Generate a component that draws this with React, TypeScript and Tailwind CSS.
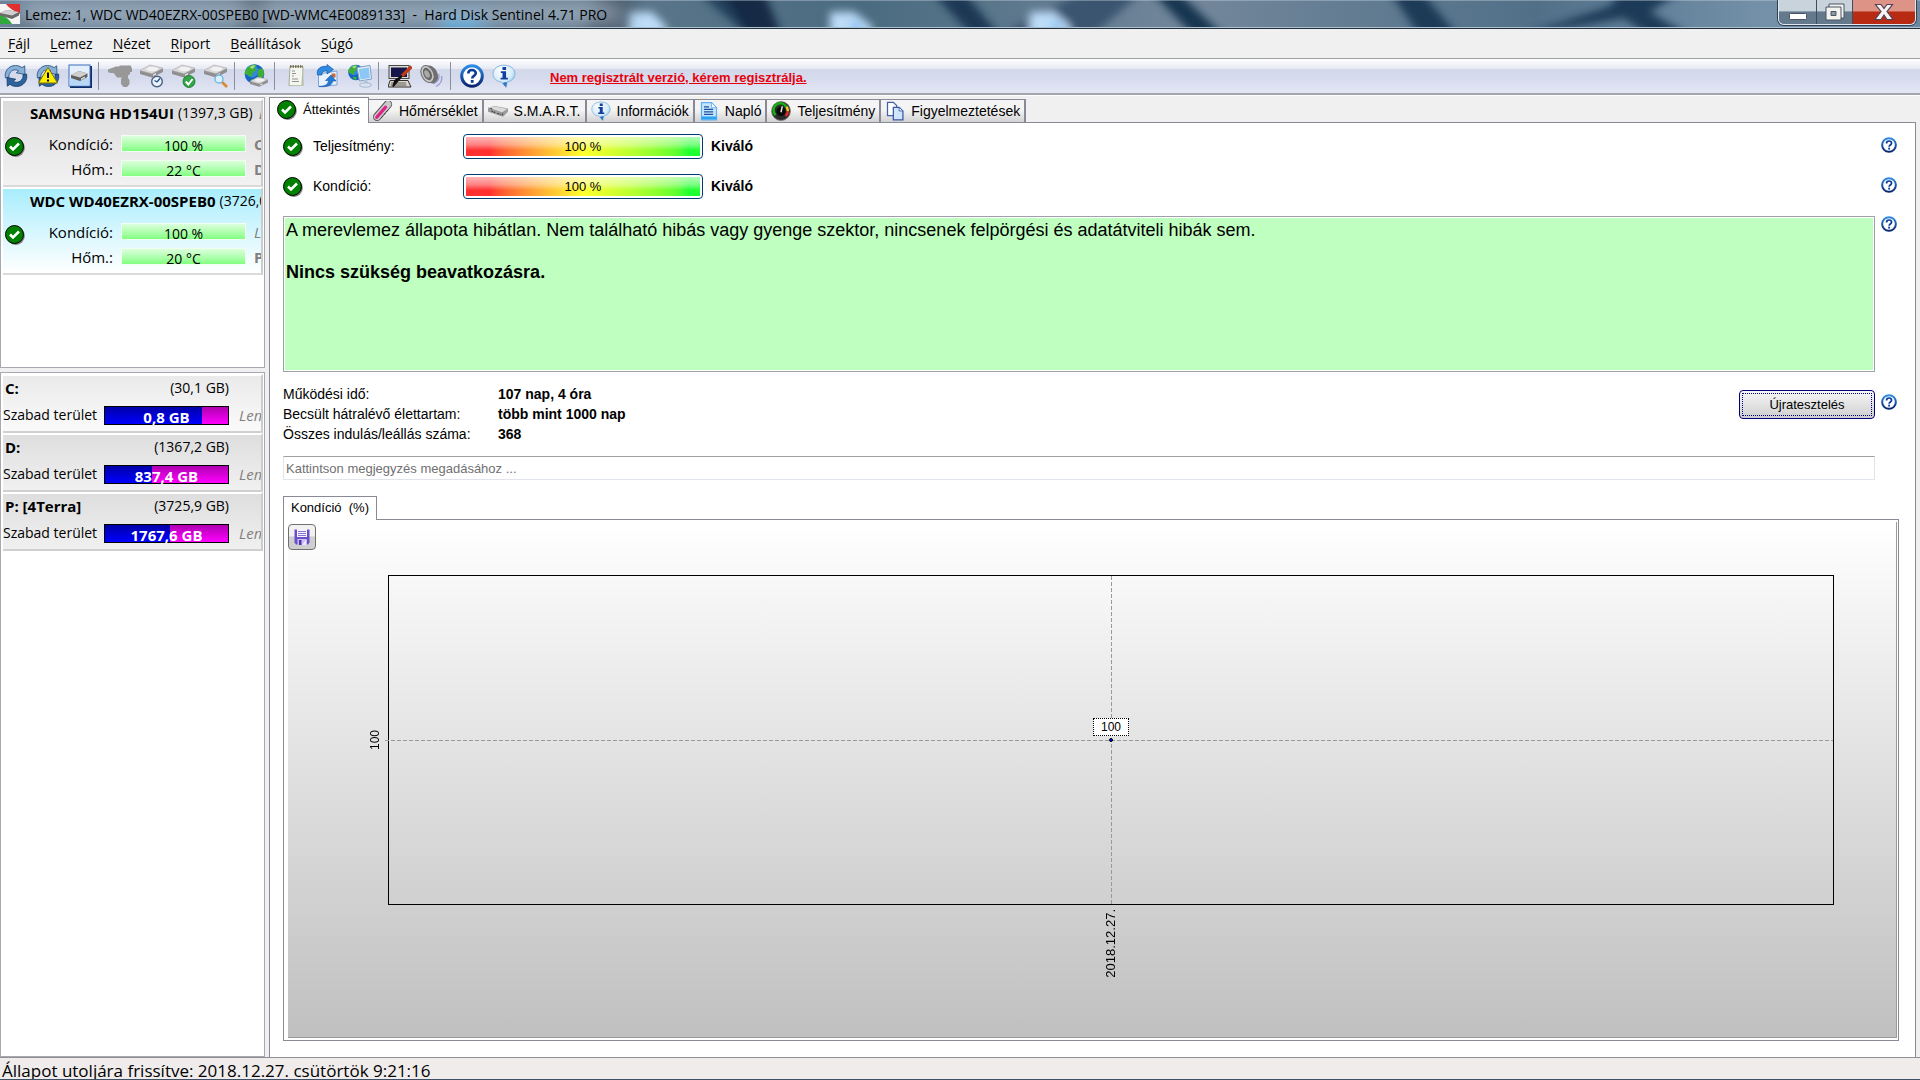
import { useState } from "react";
import type { ReactNode } from "react";

/* ---------- icons ---------- */

function CheckIcon() {
  return (
    <svg viewBox="0 0 20 20" className="h-5 w-5 shrink-0" aria-hidden="true">
      <circle cx="10.8" cy="11" r="9" fill="#808080" />
      <circle cx="9.5" cy="9.5" r="9" fill="#008000" stroke="#000" />
      <path d="M5 9.5l3 3 6-6" fill="none" stroke="#fff" strokeWidth="2.6" />
    </svg>
  );
}

function HelpIcon({ className = "h-4 w-4" }: { className?: string }) {
  return (
    <svg viewBox="0 0 24 24" className={className} aria-hidden="true">
      <defs>
        <linearGradient id="helpRing" x1="0" y1="0" x2="0" y2="1">
          <stop offset="0" stopColor="#2f8de6" />
          <stop offset="1" stopColor="#06246f" />
        </linearGradient>
      </defs>
      <circle cx="12" cy="12" r="10.3" fill="#fff" stroke="url(#helpRing)" strokeWidth="3" />
      <path
        d="M8.3 9.6c0-2.3 1.6-3.6 3.7-3.6s3.8 1.3 3.8 3.3c0 2.5-3.6 2.7-3.6 5.2"
        fill="none"
        stroke="#0d3c96"
        strokeWidth="2.6"
      />
      <rect x="10.8" y="16" width="2.8" height="2.8" fill="#0d3c96" />
    </svg>
  );
}

function InfoIcon({ className = "h-6 w-6" }: { className?: string }) {
  return (
    <svg viewBox="0 0 24 24" className={className} aria-hidden="true">
      <defs>
        <radialGradient id="infoBall" cx="0.4" cy="0.25" r="0.8">
          <stop offset="0" stopColor="#fff" />
          <stop offset="0.6" stopColor="#d5ebfa" />
          <stop offset="1" stopColor="#6fb0e2" />
        </radialGradient>
      </defs>
      <path
        d="M12 1.2c6.4 0 11 3.6 11 8.600 0 4.200-3.200 7.300-7.800 8.200L14 23.300 9.600 18.100C4.500 17.400 1 14.200 1 9.800c0-5 4.600-8.600 11-8.600z"
        fill="url(#infoBall)"
        stroke="#88b6da"
      />
      <path d="M12.500 18.300h2.600L14 23.300l-3.400-4z" fill="#2f78bd" />
      <rect x="10.500" y="3" width="3.600" height="3" fill="#12409c" />
      <path d="M8.800 7.200h5.300v6.600h1.800v1.800H8.600v-1.800h1.900V9H8.800z" fill="#12409c" />
    </svg>
  );
}

function RefreshShape() {
  return (
    <g>
      <path
        d="M1.500 14C0 7.500 4.500 1.500 11.500 1.500c2.600 0 4.800.8 6.500 2.200l2.700-1.900.3 8.700-8.700-1.700 2.500-2c-1-.7-2-1-3.500-1C7.500 5.800 4.300 9.500 5 13.500z"
        fill="#86b0d6"
        stroke="#1f4b7c"
        strokeWidth=".8"
      />
      <path
        d="M22.500 10C24 16.500 19.500 22.500 12.500 22.500c-2.600 0-4.800-.8-6.500-2.200l-2.700 1.900-.3-8.700 8.700 1.700-2.500 2c1 .7 2 1 3.500 1 3.800 0 7-3.700 6.300-7.700z"
        fill="#2d639c"
        stroke="#143a66"
        strokeWidth=".8"
      />
    </g>
  );
}

function Disk({ x = 0, y = 0 }: { x?: number; y?: number }) {
  return (
    <g transform={`translate(${x} ${y})`}>
      <path d="M0 6L10 .5 23 3.500V7L12 12.500 0 9z" fill="#8f8f8f" />
      <path d="M0 5.500L10 0l13 3.200L12 8.800z" fill="#d9d9d9" stroke="#a9a9a9" strokeWidth=".6" />
      <ellipse cx="12.500" cy="4" rx="6" ry="2.200" fill="#f1f1f1" />
      <path d="M13 9.500l3-1.500v1.500l-3 1.500z" fill="#e8e8e8" />
    </g>
  );
}

function Globe({ x, y, r }: { x: number; y: number; r: number }) {
  return (
    <g transform={`translate(${x} ${y}) scale(${r / 10})`}>
      <circle r="10" fill="#1563c4" />
      <circle cx="-2.500" cy="-3" r="6.500" fill="#4aa3ee" opacity=".6" />
      <path d="M-7-6.500c3-3 8-3.200 9-2.500l-2 3 2 2-4 3-1 4-4-2-3-1c0-3 1-5 3-6.500zM4-5l4-.5c2 3 2 6 1 8L6 5 3 1zM-3 5l4 1-1 3.500c-2 0-3-1-4-2z" fill="#3fae35" />
      <path d="M-5-7c2-2 5-2 6-1.500L-2-5z" fill="#a6e37c" />
    </g>
  );
}

function Frame({ children, className = "h-6 w-6" }: { children: ReactNode; className?: string }) {
  return (
    <svg viewBox="0 0 24 24" className={className} aria-hidden="true">
      {children}
    </svg>
  );
}

function FloppyIcon() {
  return (
    <svg viewBox="0 0 16 16" className="h-4 w-4" aria-hidden="true">
      <path d="M.500.500h15v13l-1.500 2H2l-1.500-2z" fill="#6a4fc8" />
      <rect x="3" y="0" width="10" height="8" fill="#f6f4ff" />
      <path d="M4 2.500h8M4 4.500h8M4 6.500h8" stroke="#8676d8" />
      <rect x="3.500" y="10" width="9" height="6" fill="#c9bdf2" />
      <path d="M5 11h2.500v5H5z" fill="#5132b4" />
      <path d="M8 16l4.500-6V16z" fill="#eee9ff" />
    </svg>
  );
}

const TOOL_GROUPS: { label: string; icon: ReactNode }[][] = [
  [
    { label: "Frissítés", icon: <Frame><RefreshShape /></Frame> },
    {
      label: "Hibák frissítése",
      icon: (
        <Frame>
          <RefreshShape />
          <path d="M12 3.500l9.500 15.500h-19z" fill="#ffee00" stroke="#7d7300" />
          <path d="M12 8.500v5.500M12 15.500v2" stroke="#000" strokeWidth="2" />
        </Frame>
      ),
    },
    {
      label: "Lemez felület",
      icon: (
        <Frame>
          <rect x="2" y="2" width="22" height="22" fill="#102c66" />
          <rect x="1" y="1" width="21" height="21" fill="#e4effb" stroke="#3a6fc0" />
          <path d="M1.500 14h20v7.500h-20z" fill="#b8d6f5" />
          <path d="M3 11L11 7l8.500 2.500V13L12 17l-9-3z" fill="#5f5f5f" />
          <path d="M3 11L11 7l8.500 2.500L12 13.500z" fill="#cfcfcf" />
          <path d="M13 14.500l4-2v1.500l-4 2z" fill="#e0e0e0" />
        </Frame>
      ),
    },
  ],
  [
    {
      label: "Lemez tesztek",
      icon: (
        <Frame>
          <path d="M0 5.500L8 2.500h3l1-1h11v2h1V8h-2v2l-2 1.500V14l1.500 2v4L19 23h-3.500L13 20v-5l1-1.500H9L8 12 5.500 9H2L0 8z" fill="#989898" />
        </Frame>
      ),
    },
    {
      label: "Rövid teszt",
      icon: (
        <Frame>
          <Disk y={1} />
          <circle cx="17" cy="17.500" r="5.300" fill="#eaf3fb" stroke="#47617d" strokeWidth="1.400" />
          <path d="M17 18l3-3.500M17 18l-2.500-1.500" stroke="#1c4c8d" strokeWidth="1.200" />
        </Frame>
      ),
    },
    {
      label: "Kiterjesztett teszt",
      icon: (
        <Frame>
          <Disk y={1} />
          <circle cx="17" cy="17.500" r="6" fill="#32a545" stroke="#167028" strokeWidth=".8" />
          <path d="M13.800 17.500l2.500 3 4.300-5.500" fill="none" stroke="#fff" strokeWidth="2" />
        </Frame>
      ),
    },
    {
      label: "Felület teszt",
      icon: (
        <Frame>
          <Disk y={1} />
          <path d="M18 18l5 5" stroke="#d68a33" strokeWidth="2.600" />
          <circle cx="15" cy="15" r="4" fill="#d9f1ff" stroke="#6db3de" strokeWidth="1.300" />
        </Frame>
      ),
    },
  ],
  [
    {
      label: "Online",
      icon: (
        <Frame>
          <Globe x={10.500} y={10} r={9.800} />
          <g transform="translate(6 13) scale(.78)"><Disk /></g>
        </Frame>
      ),
    },
  ],
  [
    {
      label: "Riport",
      icon: (
        <Frame>
          <path d="M6 2.500h13l-1 19H5z" fill="#f5f6f0" stroke="#a9ad9c" />
          <path d="M6 2.500h13" stroke="#6f6a48" strokeWidth="2.400" strokeDasharray="1.500 1" />
          <path d="M8 7h3M8 9.500h4M8 12h2M8 15h6M8 17.500h7" stroke="#8e9391" strokeWidth="1.200" />
          <path d="M18.500 6l1 15.500H6" fill="none" stroke="#bcc6ad" />
        </Frame>
      ),
    },
    {
      label: "Riport küldése",
      icon: (
        <Frame>
          <path d="M2.500 10l18.500-3v14L2.500 22.500z" fill="#e9f2fc" stroke="#7aa5d8" />
          <rect x="15.500" y="9.500" width="4" height="4" fill="#c9683a" />
          <path d="M1.500 11C0 5 5 1.500 11 2.500V.5l6.500 5L11 10V7C8 6.500 5.500 8 6 11z" fill="#2f8ae4" stroke="#1257a8" strokeWidth=".7" />
          <path d="M3 22.500c6 0 9-2 9.500-6H9.500L15 11l5 6h-3.500c0 4-4.500 6.500-13.500 5.500z" fill="#2479d6" stroke="#1257a8" strokeWidth=".6" />
        </Frame>
      ),
    },
    {
      label: "Hálózat",
      icon: (
        <Frame>
          <Globe x={8} y={8.500} r={7.800} />
          <path d="M9 3.500L22 1.500l1.500 13.500-12 2z" fill="#e7f1fb" stroke="#7f9fc4" />
          <path d="M10.800 5l10-1.500 1 10.500-9.300 1.500z" fill="#8dc7f5" />
          <path d="M15.500 16.500h4l.8 4h-4z" fill="#b9c8da" />
          <ellipse cx="17.500" cy="21" rx="6" ry="2.200" fill="#d9e3ef" stroke="#91a7c0" strokeWidth=".7" />
        </Frame>
      ),
    },
  ],
  [
    {
      label: "Beállítások",
      icon: (
        <Frame>
          <rect x="1" y="1.500" width="20" height="13" fill="#dcdad5" stroke="#4b4843" />
          <rect x="3" y="3.500" width="16" height="9.500" fill="#16164a" />
          <path d="M2 16.500h18l3 6.500H0z" fill="#dad7d0" stroke="#33302b" />
          <path d="M3 19h15M2.500 21h16" stroke="#615e58" />
          <path d="M23.500 2.500L14 12" stroke="#bd3a18" strokeWidth="3.400" />
          <path d="M14 12L5 22.500l2-6z" stroke="#111" strokeWidth="1.600" />
        </Frame>
      ),
    },
    {
      label: "Hangok",
      icon: (
        <Frame>
          <ellipse cx="11" cy="10.500" rx="6.500" ry="9.500" transform="rotate(-25 11 10.500)" fill="#6f6f6f" />
          <ellipse cx="7.500" cy="10" rx="6" ry="9" transform="rotate(-25 7.500 10)" fill="#c6c6c6" stroke="#6d6d6d" />
          <ellipse cx="7.500" cy="10" rx="4" ry="6.500" transform="rotate(-25 7.500 10)" fill="#666" />
          <ellipse cx="7" cy="10" rx="2.400" ry="4" transform="rotate(-25 7 10)" fill="#a9a9a9" />
          <path d="M18.500 10c1.500 4-.5 7.500-5 10M21.500 12c1 4-1 8-5.500 10.500" fill="none" stroke="#9b9bd0" strokeWidth="1.300" />
        </Frame>
      ),
    },
  ],
  [
    { label: "Súgó", icon: <HelpIcon className="h-6 w-6" /> },
    { label: "Névjegy", icon: <InfoIcon /> },
  ],
];

/* ---------- title bar ---------- */

function AeroBackdrop() {
  return (
    <svg
      className="absolute inset-0 h-full w-full"
      viewBox="0 0 1920 28"
      preserveAspectRatio="none"
      aria-hidden="true"
    >
      <defs>
        <linearGradient id="aero" x1="0" x2="1">
          <stop offset="0" stopColor="#6c8399" />
          <stop offset="0.3" stopColor="#5f788c" />
          <stop offset="0.45" stopColor="#4a6b80" />
          <stop offset="0.62" stopColor="#73879b" />
          <stop offset="0.8" stopColor="#517088" />
          <stop offset="0.92" stopColor="#7591aa" />
          <stop offset="1" stopColor="#6b88a0" />
        </linearGradient>
        <filter id="soft" x="-5%" y="-60%" width="110%" height="220%">
          <feGaussianBlur stdDeviation="4" />
        </filter>
        <filter id="softer" x="-5%" y="-60%" width="110%" height="220%">
          <feGaussianBlur stdDeviation="9" />
        </filter>
      </defs>
      <rect width="1920" height="28" fill="url(#aero)" />
      <g filter="url(#soft)">
        <path d="M698-8h34l34 44h-18z" fill="#203f5b" />
        <path d="M722-8h42l18 44h-34z" fill="#122b45" />
        <path d="M932-8h32l36 44h-28z" fill="#1a3954" />
        <path d="M998 36l84-44h60l-50 44z" fill="#3a5570" />
        <path d="M1152-8h26l46 44h-30z" fill="#173450" />
        <path d="M1390-8h32l36 44h-38z" fill="#1c3b57" />
        <path d="M1520 36l90-30 10-14h60l-30 20 40 24h-42l-24-18z" fill="#1d3b58" />
        <path d="M628 12h24l14 14v12h-38zM830 12h24l18 14v12h-42zM1030 12h24l16 14v12h-40z" fill="#bcdcf8" />
        <path d="M852 20l14 12h-14zM1053 20l12 12h-12z" fill="#6db4f0" />
      </g>
      <g filter="url(#softer)">
        <path d="M440 12h44v30h-44z" fill="#3aa0d8" />
        <path d="M600-8h30l-10 44h-40z" fill="#1b2f45" />
        <path d="M240-8h28v44h-28zM20 12h14v24H20z" fill="#22384e" />
        <path d="M20 3h600v20H20z" fill="#aebccb" opacity=".75" />
      </g>
      <path d="M0 .500h1920" stroke="#c4d2de" opacity=".4" />
    </svg>
  );
}

function AppIcon() {
  return (
    <svg viewBox="0 0 20 20" className="h-5 w-5 shrink-0" aria-hidden="true">
      <rect width="20" height="20" fill="#f5f5f5" />
      <path d="M6 0h14v10C14 7 10 5 6 0z" fill="#e03030" />
      <path d="M0 10c5 2 9 5 12 10H0z" fill="#2fa83c" />
      <path d="M0 9l7-3 12 2v3.500L12 15 0 11.500z" fill="#6a6a6a" />
      <path d="M0 9l7-3 12 2-7 3.500z" fill="#d0d0d0" />
    </svg>
  );
}

function TitleBar() {
  return (
    <header className="relative flex h-[29px] shrink-0 items-start overflow-hidden border-b border-[#22303e] bg-[#5f788c]">
      <AeroBackdrop />
      <div className="relative flex h-7 min-w-0 flex-1 items-center gap-[5px] border-b border-[#aec1d1]">
        <AppIcon />
        <h1 className="whitespace-pre pt-px text-[14px] text-black">
          {"Lemez: 1, WDC WD40EZRX-00SPEB0 [WD-WMC4E0089133]  -  Hard Disk Sentinel 4.71 PRO"}
        </h1>
      </div>
      <div className="relative flex h-7 border-b border-[#aec1d1] pr-1">
        <div className="flex h-[25px] overflow-hidden rounded-b-md border border-t-0 border-[#dfe8f0] shadow-[0_0_0_1px_#2f4152]">
          <button
            type="button"
            aria-label="Kis méret"
            className="flex w-[38px] items-center justify-center border-r border-[#3c4d5e] bg-linear-to-b from-[#c8d3dc] from-45% to-[#64798c] to-50% pt-2"
          >
            <svg viewBox="0 0 18 7" className="h-[7px] w-[18px]" aria-hidden="true">
              <rect x=".5" y=".5" width="17" height="6" rx="1" fill="#fff" stroke="#4b5364" />
            </svg>
          </button>
          <button
            type="button"
            aria-label="Előző méret"
            className="flex w-9 items-center justify-center border-r border-[#3c4d5e] bg-linear-to-b from-[#c8d3dc] from-45% to-[#64798c] to-50%"
          >
            <svg viewBox="0 0 20 18" className="h-[18px] w-5" aria-hidden="true">
              <path d="M4 1h15v14H4z" fill="#f3f3f0" stroke="#4b5364" />
              <path d="M1 4h15v13H1z" fill="#f3f3f0" stroke="#4b5364" />
              <path d="M6 8.500h5v4H6z" fill="#8799aa" stroke="#4b5364" />
            </svg>
          </button>
          <button
            type="button"
            aria-label="Bezárás"
            className="flex w-[62px] items-center justify-center bg-linear-to-b from-[#dd9385] from-45% to-[#b92a12] to-50%"
          >
            <svg viewBox="0 0 20 18" className="h-[18px] w-5" aria-hidden="true">
              <path
                d="M1.500 1.500h5.500l3 4 3-4h5.500l-5.500 7 6 8h-6l-3-4.500-3 4.500H1l6-8z"
                fill="#f7f5f3"
                stroke="#55405a"
                strokeWidth="1.200"
              />
            </svg>
          </button>
        </div>
      </div>
    </header>
  );
}

const MENU = ["Fájl", "Lemez", "Nézet", "Riport", "Beállítások", "Súgó"];

function MenuBar() {
  return (
    <nav className="flex h-[29px] shrink-0 items-center gap-5 bg-[#f0f0f0] px-2">
      {MENU.map((item) => (
        <button key={item} type="button" className="text-[14px]">
          <span className="underline underline-offset-2">{item[0]}</span>
          {item.slice(1)}
        </button>
      ))}
    </nav>
  );
}

function Toolbar() {
  return (
    <div className="flex h-[37px] shrink-0 items-center border-t border-b-2 border-t-[#a0a0a0] border-b-[#a3a4ad] bg-[linear-gradient(#fff,#e6eaf3_28%,#d3d8eb_29%,#d5daed_55%,#e3e7f5)] pl-1">
      {TOOL_GROUPS.map((group, i) => (
        <div
          key={group[0].label}
          className={i === 0 ? "flex gap-2 pr-1.5" : "flex gap-2 border-l border-[#8d8f98] py-0.5 pr-1.5 pl-[9px]"}
        >
          {group.map((tool) => (
            <button key={tool.label} type="button" aria-label={tool.label} title={tool.label}>
              {tool.icon}
            </button>
          ))}
        </div>
      ))}
      <a
        href="#register"
        className="mt-1 ml-7 font-['Liberation_Sans',sans-serif] text-[13px] font-bold text-red-600 underline"
      >
        Nem regisztrált verzió, kérem regisztrálja.
      </a>
    </div>
  );
}

/* ---------- left column ---------- */

const DISKS = [
  { name: "SAMSUNG HD154UI", size: "(1397,3 GB)", extra: "Lemez: 0", temp: "22 °C", row1: "C:", row2: "D:", selected: false },
  { name: "WDC WD40EZRX-00SPEB0", size: "(3726,0 GB)", extra: "", temp: "20 °C", row1: "Lemez: 1", row2: "P: [4Terra]", selected: true },
];

const DRIVES = [
  { name: "C:", size: "(30,1 GB)", free: "0,8 GB", used: 79, top: "from-[#eaeaea] to-[#fafafa]" },
  { name: "D:", size: "(1367,2 GB)", free: "837,4 GB", used: 38, top: "from-[#dedede] to-[#f0f0f0]" },
  { name: "P: [4Terra]", size: "(3725,9 GB)", free: "1767,6 GB", used: 53, top: "from-[#dedede] to-[#f0f0f0]" },
];

function StatBar({ value }: { value: string }) {
  return (
    <div className="flex h-[17px] w-[125px] shrink-0 items-center justify-center overflow-hidden border border-[#f0fff0] bg-linear-to-b from-[#dcffdc] to-[#80ff80] pt-1 text-[14px]">
      {value}
    </div>
  );
}

function DiskCard({ disk, onSelect }: { disk: (typeof DISKS)[number]; onSelect: () => void }) {
  return (
    <button
      type="button"
      onClick={onSelect}
      className={
        "flex h-[88px] w-full flex-col overflow-hidden border-t-2 border-r-2 border-b-2 border-t-white border-r-[#cccccc] border-b-[#dadada] bg-linear-to-b text-left whitespace-nowrap " +
        (disk.selected ? "from-[#a8edfd] to-white" : "from-[#dcdcdc] to-[#f2f2f2]")
      }
    >
      <div className="flex h-6 w-full items-center gap-1 pl-[27px]">
        <b>{disk.name}</b>
        <span className="text-[14px]">{disk.size}</span>
        <i className="ml-0.5 text-[#808080]">{disk.extra}</i>
      </div>
      <div className="flex w-full items-start pt-2 pl-0.5">
        <div className="pt-1">
          <CheckIcon />
        </div>
        <div className="flex flex-col gap-1">
          <div className="flex h-[21px] items-center">
            <span className="w-[88px] text-right">Kondíció:</span>
            <span className="w-2" />
            <StatBar value="100 %" />
            {disk.extra ? (
              <b className="pl-2 text-[#808080]">{disk.row1}</b>
            ) : (
              <i className="pl-2 text-[#808080]">{disk.row1}</i>
            )}
          </div>
          <div className="flex h-[21px] items-center">
            <span className="w-[88px] text-right">Hőm.:</span>
            <span className="w-2" />
            <StatBar value={disk.temp} />
            <b className="pl-2 text-[#808080]">{disk.row2}</b>
          </div>
        </div>
      </div>
    </button>
  );
}

function DriveCard({ drive }: { drive: (typeof DRIVES)[number] }) {
  return (
    <div
      className={
        "flex h-[59px] flex-col overflow-hidden border-t-2 border-r-2 border-b-2 border-t-white border-r-[#cccccc] border-b-[#d0d0d0] bg-linear-to-b whitespace-nowrap " +
        drive.top
      }
    >
      <div className="flex h-6 items-center justify-between pr-8 pl-0.5">
        <b>{drive.name}</b>
        <span className="text-[14px]">{drive.size}</span>
      </div>
      <div className="mt-[5px] flex items-center">
        <span className="w-[101px] shrink-0 text-[14px]">Szabad terület</span>
        <div className="relative flex h-[19px] w-[125px] shrink-0 items-center justify-center border border-black bg-linear-to-b from-[#b000b0] to-[#ff00ff]">
          <div
            className="absolute inset-y-0 left-0 bg-linear-to-b from-[#0000a8] to-[#0000ff]"
            style={{ width: `${drive.used}%` }}
          />
          <b className="relative pt-1 text-white">{drive.free}</b>
        </div>
        <i className="pl-2.5 text-[#808080]">Lemez: 0</i>
      </div>
    </div>
  );
}

function Sidebar({ onSelect }: { onSelect: (name: string) => void }) {
  return (
    <aside className="flex w-[265px] shrink-0 flex-col gap-1 text-[15px] leading-5">
      <div className="h-[271px] shrink-0 border border-[#a8a8b0] bg-white py-px pr-px pl-0.5">
        {DISKS.map((disk) => (
          <DiskCard key={disk.name} disk={disk} onSelect={() => onSelect(disk.name)} />
        ))}
      </div>
      <div className="flex-1 border border-[#a8a8b0] bg-white pt-px pr-px pl-0.5">
        {DRIVES.map((drive) => (
          <DriveCard key={drive.name} drive={drive} />
        ))}
      </div>
    </aside>
  );
}

/* ---------- tabs ---------- */

const TABS: { label: string; icon: ReactNode }[] = [
  {
    label: "Hőmérséklet",
    icon: (
      <Frame className="h-5 w-5 shrink-0">
        <path d="M5 19L18 4" stroke="#4a4a4a" strokeWidth="10" strokeLinecap="round" />
        <path d="M5 19L18 4" stroke="#c9c9c9" strokeWidth="8" strokeLinecap="round" />
        <path d="M4.500 19.500L15 7.500" stroke="#e0218a" strokeWidth="4" strokeLinecap="round" />
        <path d="M10 20l2-2M13 16.500l2-2M16 13l2-2" stroke="#222" />
      </Frame>
    ),
  },
  {
    label: "S.M.A.R.T.",
    icon: (
      <Frame className="h-5 w-5 shrink-0">
        <path d="M0 8l8-2 16 3v4l-6 6-9-3-9-3z" fill="#9b9b9b" />
        <path d="M1 8l7-1.500L23 9.500l-6 4z" fill="#dcdcdc" />
        <path d="M4 12l5 2M11 15l4 1M17 17l1-3M3 9h3" stroke="#444" strokeWidth="1.500" strokeDasharray="2 1" />
      </Frame>
    ),
  },
  { label: "Információk", icon: <InfoIcon className="h-5 w-5 shrink-0" /> },
  {
    label: "Napló",
    icon: (
      <Frame className="h-5 w-5 shrink-0">
        <path d="M3 2h12l6 6v14.500H3z" fill="#c6e6fc" stroke="#5fb0ee" strokeWidth="1.500" />
        <path d="M15 2l6 6h-6z" fill="#fff" stroke="#5fb0ee" />
        <path d="M6 7h6M6 10h11M6 13h11M6 16h11" stroke="#1d4f9e" strokeWidth="1.500" />
        <path d="M3 18.500h18V22H3z" fill="#2da1f2" />
      </Frame>
    ),
  },
  {
    label: "Teljesítmény",
    icon: (
      <Frame className="h-5 w-5 shrink-0">
        <circle cx="12" cy="12" r="11.300" fill="#2b2b2b" stroke="#806f6f" />
        <path d="M5.500 17A8.300 8.300 0 1 1 18.500 7" fill="none" stroke="#12b312" strokeWidth="3" />
        <path d="M18.500 7a8.300 8.300 0 0 1 1.700 5" fill="none" stroke="#f1d21f" strokeWidth="3" />
        <path d="M20.200 12a8.300 8.300 0 0 1-2.700 6" fill="none" stroke="#e02a1c" strokeWidth="3" />
        <circle cx="12" cy="12.500" r="5.500" fill="#0a0a0a" />
        <path d="M12 13.500l1.500-7" stroke="#e8e8e8" strokeWidth="1.800" />
      </Frame>
    ),
  },
  {
    label: "Figyelmeztetések",
    icon: (
      <Frame className="h-5 w-5 shrink-0">
        <path d="M3 1.500h7l4 4v12H3z" fill="#fff" stroke="#4560a8" strokeWidth="1.500" />
        <path d="M10 7.500h7l4.500 4.500v10.500H10z" fill="#cfe5fb" stroke="#3957a5" strokeWidth="1.500" />
        <path d="M17 7.500l4.500 4.500H17z" fill="#fff" stroke="#3957a5" />
      </Frame>
    ),
  },
];

function TabStrip() {
  return (
    <div role="tablist" className="flex h-[25px] items-end">
      <button
        type="button"
        role="tab"
        aria-selected="true"
        className="relative -mb-px flex h-[26px] w-[100px] shrink-0 items-center gap-1.5 border border-b-0 border-[#8a8a96] bg-white pb-px pl-[7px] text-[13px]"
      >
        <CheckIcon />
        Áttekintés
      </button>
      {TABS.map((tab) => (
        <button
          key={tab.label}
          type="button"
          role="tab"
          aria-selected="false"
          className="flex h-[23px] shrink-0 items-center gap-1.5 border-t border-r-2 border-[#8a8a96] bg-linear-to-b from-[#f4f4f4] from-45% to-[#d2d2d2] px-1 text-[14px]"
        >
          {tab.icon}
          {tab.label}
        </button>
      ))}
    </div>
  );
}

/* ---------- overview page ---------- */

function HelpButton() {
  return (
    <button type="button" aria-label="Súgó" className="h-4 w-4 shrink-0">
      <HelpIcon />
    </button>
  );
}

function Gauge({ label }: { label: string }) {
  return (
    <div className="flex h-[25px] items-center text-[14px]">
      <CheckIcon />
      <span className="w-[160px] shrink-0 pl-2.5">{label}</span>
      <div className="h-[25px] w-60 shrink-0 rounded-sm border border-[#003c74] bg-white p-0.5 text-[13px]">
        <div className="h-full bg-linear-to-r from-[#ff3030] from-10% via-[#ffff30] to-[#20ff30] to-95%">
          <div className="flex h-full items-center justify-center bg-linear-to-b from-white/65 via-white/40 via-40% to-transparent to-70%">
            100 %
          </div>
        </div>
      </div>
      <b className="pl-2">Kiváló</b>
      <div className="mb-1 ml-auto flex">
        <HelpButton />
      </div>
    </div>
  );
}

const FACTS = [
  ["Működési idő:", "107 nap, 4 óra"],
  ["Becsült hátralévő élettartam:", "több mint 1000 nap"],
  ["Összes indulás/leállás száma:", "368"],
];

function ConditionChart() {
  return (
    <div className="flex flex-1 flex-col">
      <div className="flex">
        <button
          type="button"
          className="relative -mb-px h-6 w-[94px] border border-b-0 border-[#8a8a96] bg-white pb-0.5 whitespace-pre"
        >
          {"Kondíció  (%)"}
        </button>
      </div>
      <div className="flex flex-1 border border-[#8a8a96] bg-white pt-0.5 pr-px pb-0.5 pl-1">
        <div className="flex flex-1 flex-col border-r border-b border-[#9a9a9a] bg-linear-to-b from-white to-[#c0c0c0] pr-[62px]">
          <button
            type="button"
            aria-label="Mentés"
            className="mt-0.5 mb-[25px] flex h-[26px] w-7 items-center justify-center rounded-sm border border-[#707070] bg-linear-to-b from-[#f2f2f2] from-45% to-[#cfcfcf] to-50%"
          >
            <FloppyIcon />
          </button>
          <div className="flex flex-1 text-[12px]">
            <div className="flex w-[100px] items-center justify-end pr-1">
              <span className="rotate-180 [writing-mode:vertical-rl]">100</span>
            </div>
            <div className="relative flex-1 border border-black">
              <svg className="absolute inset-0 h-full w-full overflow-visible" aria-hidden="true">
                <line x1="-4" x2="100%" y1="50%" y2="50%" stroke="#999" strokeDasharray="4 2" shapeRendering="crispEdges" />
                <line x1="50%" x2="50%" y1="0" y2="100%" stroke="#999" strokeDasharray="4 2" shapeRendering="crispEdges" />
                <circle cx="50%" cy="50%" r="1.500" fill="#0000ff" stroke="#000" />
              </svg>
              <div className="absolute bottom-1/2 left-1/2 mb-1 flex h-[18px] w-9 -translate-x-1/2 items-center justify-center border border-dotted border-black bg-white">
                100
              </div>
            </div>
          </div>
          <div className="flex h-[132px] justify-center pl-[100px] text-[13px]">
            <span className="mt-1 h-fit rotate-180 [writing-mode:vertical-rl]">2018.12.27.</span>
          </div>
        </div>
      </div>
    </div>
  );
}

function Overview() {
  const [note, setNote] = useState("");

  return (
    <div className="flex flex-1 flex-col border border-b-0 border-[#8a8a96] bg-white pt-[11px] pr-4 pb-4 pl-[13px]">
      <div className="flex flex-col gap-[15px] pr-0.5">
        <Gauge label="Teljesítmény:" />
        <Gauge label="Kondíció:" />
      </div>

      <div className="mt-[17px] flex gap-1.5 pr-0.5">
        <div className="h-[156px] flex-1 border border-[#a0a0a8] bg-[#bfffbf] px-0.5 pt-[3px] text-[18px] leading-[21px] outline-1 -outline-offset-2 outline-white">
          <p>
            A merevlemez állapota hibátlan. Nem található hibás vagy gyenge szektor, nincsenek felpörgési és
            adatátviteli hibák sem.
          </p>
          <p className="mt-[21px] font-bold">Nincs szükség beavatkozásra.</p>
        </div>
        <HelpButton />
      </div>

      <div className="mt-3 flex items-start pr-0.5">
        <dl className="grid grid-cols-[215px_auto] text-[14px] leading-5">
          {FACTS.map(([label, value]) => (
            <div key={label} className="contents">
              <dt>{label}</dt>
              <dd className="font-bold">{value}</dd>
            </div>
          ))}
        </dl>
        <button
          type="button"
          className="mt-1.5 ml-auto h-[29px] w-[136px] rounded-sm border border-[#00007b] bg-linear-to-b from-[#f7f7f7] to-[#cfcfcf] p-0.5"
        >
          <span className="flex h-full items-center justify-center border border-dotted border-[#00007b]">
            Újratesztelés
          </span>
        </button>
        <div className="mt-2.5 ml-1.5 flex">
          <HelpButton />
        </div>
      </div>

      <input
        type="text"
        aria-label="Megjegyzés"
        value={note}
        onChange={(e) => setNote(e.target.value)}
        placeholder="Kattintson megjegyzés megadásához ..."
        className="mt-3 mr-6 mb-4 h-6 border border-[#e0e5ec] border-t-[#a0a0a0] px-0.5 outline-none placeholder:text-[#707070]"
      />

      <ConditionChart />
    </div>
  );
}

export default function App() {
  const [selected, setSelected] = useState(DISKS[1].name);

  return (
    <div className="flex min-h-screen flex-col bg-[#f0f0f0] font-['Open_Sans','Noto_Sans',sans-serif] text-black">
      <TitleBar />
      <MenuBar />
      <Toolbar />
      <div className="flex flex-1 gap-1 border-t border-white pt-px pr-1">
        <Sidebar onSelect={setSelected} />
        <main
          aria-label={selected}
          className="flex min-w-0 flex-1 flex-col font-['Liberation_Sans',sans-serif] text-[13px]"
        >
          <TabStrip />
          <Overview />
        </main>
      </div>
      <footer className="h-[22px] shrink-0 overflow-hidden border-t border-[#8f8f93] bg-[#f0ecec] pl-0.5 text-[17px] leading-[26px]">
        Állapot utoljára frissítve: 2018.12.27. csütörtök 9:21:16
      </footer>
      <div className="h-px shrink-0 bg-[#3f5166]" />
    </div>
  );
}
